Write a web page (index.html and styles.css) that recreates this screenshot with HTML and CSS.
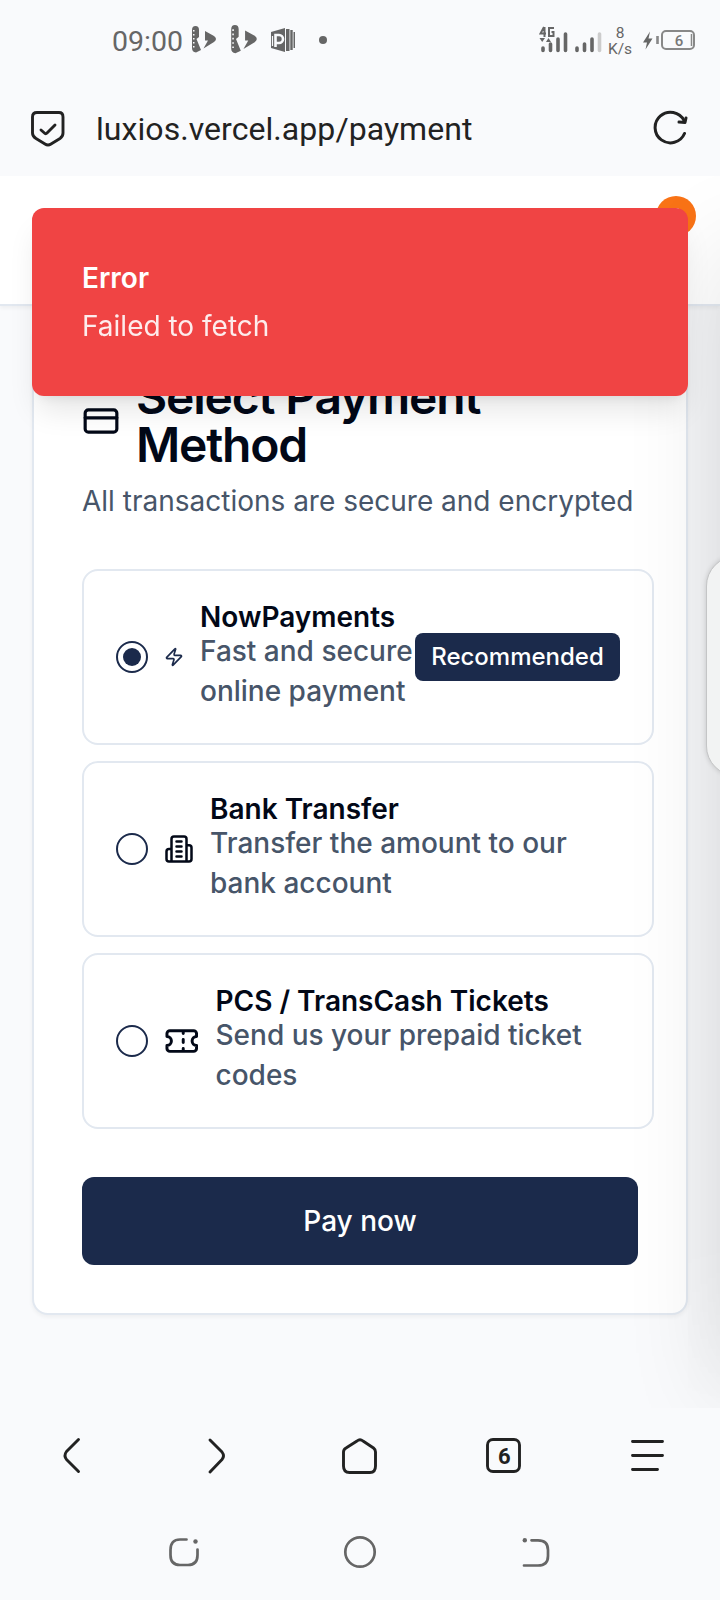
FILE: index.html
```html
<!DOCTYPE html>
<html lang="en">
<head>
<meta charset="utf-8">
<title>Payment</title>
<link rel="stylesheet" href="styles.css">
</head>
<body>
<div class="status">
  <span class="clock">09:00</span>
  <svg class="st-app" width="26" height="30" viewBox="0 0 26 30"><path fill="#666" fill-rule="evenodd" d="M1 5Q1 1 4.500 1T8 5V12L5.500 14L10 25L5 27.500Q1 27 1 23ZM2 5h1.500v1.500H2zM2 9h1.500v1.500H2zM2 13h1.500v1.500H2zM2 17h1.500v1.500H2zM2 21h1.500v1.500H2z"/><path fill="#666" d="M14 6L23 11Q27 14 23 17L12.500 23.500L17 15.500H14Z"/></svg>
  <svg class="st-app2" width="28" height="32" viewBox="0 0 26 30"><path fill="#666" fill-rule="evenodd" d="M1 5Q1 1 4.500 1T8 5V12L5.500 14L10 25L5 27.500Q1 27 1 23ZM2 5h1.500v1.500H2zM2 9h1.500v1.500H2zM2 13h1.500v1.500H2zM2 17h1.500v1.500H2zM2 21h1.500v1.500H2z"/><path fill="#666" d="M14 6L23 11Q27 14 23 17L12.500 23.500L17 15.500H14Z"/></svg>
  <svg class="st-doc" width="26" height="26" viewBox="0 0 26 26"><path fill="#666" d="M1 5L15 1V25L1 21ZM16 2H19.500V24H16ZM20.300 3H22.700V23H20.300ZM23.500 5H25V21H23.500Z"/><path d="M5.500 20V8H9a3.500 3.500 0 0 1 0 8H5" fill="none" stroke="#f9fafc" stroke-width="2.600"/><path d="M2.500 9V19" stroke="#f9fafc" stroke-width="1.200"/></svg>
  <span class="dot"></span>
  <svg class="signal" width="64" height="32" viewBox="0 0 64 32"><g fill="none" stroke="#666" stroke-width="2"><path d="M5 2L1.500 8.500H7M5.500 2V12M15 3H10V11H14.500V7H12.500"/></g><path fill="#666" d="M.5 13H6L3.200 17zM7 17H12L9.500 13z"/><g stroke="#666" stroke-width="3.600" stroke-linecap="round"><path d="M4 23V25.500M11.500 19V25.500M19 14V25.500M26.500 9V25.500M38 23V25.500M45.500 19V25.500M53 14V25.500"/><path stroke="#ccc" d="M60.500 9V25.500"/></g></svg>
  <span class="speed"><span>8</span><span>K/s</span></span>
  <svg class="battery" width="54" height="24" viewBox="0 0 54 24"><path fill="#666" d="M8 3.500L1 14.500H5L3.500 21.500L10.500 10.500H6.500Z"/><path d="M15.500 8V16" stroke="#888" stroke-width="2.600"/><rect x="20" y="3" width="32" height="18" rx="4" fill="none" stroke="#888" stroke-width="2"/><path d="M49.500 6V18" stroke="#888" stroke-width="1.500"/><text x="37" y="17.500" text-anchor="middle" class="batt-num">6</text></svg>
</div>
<div class="urlbar">
  <svg class="shield" width="34" height="36" viewBox="0 0 34 36"><g fill="none" stroke="#222" stroke-width="2.900" stroke-linecap="round" stroke-linejoin="round"><path d="M6 1.500H28Q32 1.500 32 6V22Q32 25.500 29 27.500L20 33Q17 35 14 33L5 27.500Q1.500 25.500 1.500 22V6Q1.500 1.500 6 1.500Z"/><path d="M10 19L14 22.500Q15 23 16 22L24 14"/></g></svg>
  <span class="url">luxios.vercel.app/payment</span>
  <svg class="reload" width="36" height="36" viewBox="0 0 36 36"><g fill="none" stroke="#222" stroke-width="3" stroke-linecap="round" stroke-linejoin="round"><path d="M31.500 23.500A15.300 15.300 0 1 1 31 10.500"/><path d="M33 8L32 12.500L26 12"/></g></svg>
</div>
<div class="page">
  <header class="head"><span class="count">1</span></header>
  <main class="main">
    <section class="card">
      <div class="card-title">
        <svg width="38" height="48" viewBox="0 0 24 24" class="ico"><rect width="20" height="14" x="2" y="5" rx="2"/><path d="M2 10H22"/></svg>
        <h1>Select Payment Method</h1>
      </div>
      <p class="sub">All transactions are secure and encrypted</p>
      <div class="options">
        <div class="option">
          <span class="radio on"></span>
          <svg width="20" height="40" viewBox="0 0 24 24" class="ico navy"><path d="M4 14a1 1 0 0 1-.78-1.630l9.900-10.200a.5.5 0 0 1 .86.460l-1.920 6.020A1 1 0 0 0 13 10h7a1 1 0 0 1 .78 1.630l-9.900 10.200a.5.5 0 0 1-.86-.460l1.920-6.020A1 1 0 0 0 11 14z"/></svg>
          <div class="txt first"><b>NowPayments</b><span>Fast and secure online payment</span></div>
          <span class="badge">Recommended</span>
        </div>
        <div class="option">
          <span class="radio"></span>
          <svg width="30" height="40" viewBox="0 0 24 24" class="ico"><path d="M6 22V4a2 2 0 0 1 2-2h8a2 2 0 0 1 2 2v18ZM6 12H4a2 2 0 0 0-2 2v6a2 2 0 0 0 2 2h2M18 9h2a2 2 0 0 1 2 2v9a2 2 0 0 1-2 2h-2M10 6h4M10 10h4M10 14h4M10 18h4"/></svg>
          <div class="txt"><b>Bank Transfer</b><span>Transfer the amount to our bank account</span></div>
        </div>
        <div class="option">
          <span class="radio"></span>
          <svg width="35.500" height="40" viewBox="0 0 24 24" class="ico"><path d="M2 9a3 3 0 0 1 0 6v2a2 2 0 0 0 2 2h16a2 2 0 0 0 2-2v-2a3 3 0 0 1 0-6V7a2 2 0 0 0-2-2H4a2 2 0 0 0-2 2ZM13 5v2M13 17v2M13 11v2"/></svg>
          <div class="txt"><b>PCS / TransCash Tickets</b><span>Send us your prepaid ticket codes</span></div>
        </div>
      </div>
      <button class="pay">Pay now</button>
    </section>
  </main>
  <div class="edge-shade"></div>
  <div class="edge-strip"></div>
  <div class="handle"></div>
  <div class="toast"><strong>Error</strong><span>Failed to fetch</span></div>
</div>
<nav class="toolbar">
  <svg width="40" height="40" viewBox="0 0 40 40"><path d="M26.500 3.500L14.500 15.500Q11.500 19.500 14.500 23.500L26.500 35.500"/></svg>
  <svg width="40" height="40" viewBox="0 0 40 40"><path d="M14 4L26 16Q29 20 26 23.500L14 36"/></svg>
  <svg width="40" height="40" viewBox="0 0 40 40"><path d="M17 5Q20 2.500 23 5L33.500 12Q35.500 13.500 35.500 16V30Q35.500 36.500 30 36.500H9.500Q3.500 36.500 3.500 30V16Q3.500 13.500 6 12Z"/></svg>
  <svg width="40" height="40" viewBox="0 0 40 40"><rect x="3.500" y="3.500" width="32" height="32" rx="5.500"/><text x="20.300" y="27.500" text-anchor="middle" class="tabs">6</text></svg>
  <svg width="40" height="40" viewBox="0 0 40 40"><path d="M4.500 5.500H34.500M4.500 19.500H34.500M4.500 33.500H29.500"/></svg>
</nav>
<nav class="sysnav">
  <svg width="40" height="40" viewBox="0 0 40 40"><path d="M22.500 7.500H16Q6.500 7.500 6.500 18V23Q6.500 33 16 33H24Q33.500 33 33.500 23V17.500"/><circle class="pt" cx="31.500" cy="9.500" r="2.200"/></svg>
  <svg width="40" height="40" viewBox="0 0 40 40"><circle cx="20" cy="20" r="14.700"/></svg>
  <svg width="40" height="40" viewBox="0 0 40 40"><path d="M15.500 8.300H22Q32 8.300 32 18V24Q32 33.500 22 33.500H8"/><circle class="pt" cx="8.800" cy="8.300" r="2.200"/></svg>
</nav>
</body>
</html>
```
FILE: styles.css
```css
* { box-sizing: border-box; }
body {
  margin: 0;
  width: 720px;
  height: 1600px;
  overflow: hidden;
  display: flex;
  flex-direction: column;
  background: #f9fafc;
  font-family: Inter, "Liberation Sans", sans-serif;
  color: #020817;
}
svg { flex: none; display: block; }

/* Phone status bar */
.status {
  height: 80px;
  padding-left: 112px;
  display: flex;
  align-items: center;
  color: #666;
  font-family: Roboto, sans-serif;
}
.clock { width: 79px; font-size: 28.500px; line-height: 32px; margin-top: 4px; }
.st-app { margin-right: 13px; }
.st-app2 { margin-right: 12px; }
.st-doc { margin-right: 23px; }
.dot { width: 8px; height: 8px; border-radius: 50%; background: #666; }
.signal { margin-left: 212px; margin-top: 2px; }
.speed {
  width: 28px;
  margin-left: 3px;
  margin-top: 2px;
  display: flex;
  flex-direction: column;
  align-items: center;
  font-size: 15.500px;
  line-height: 16px;
}
.battery { margin-left: 8px; }
.batt-num { font: 500 15px Roboto, sans-serif; fill: #777; }

/* Address bar */
.urlbar { height: 96px; padding: 0 32px 0 31px; display: flex; align-items: center; }
.shield { margin-top: 1px; }
.url {
  flex: 1;
  margin-left: 31px;
  margin-top: 2px;
  font: 400 32px/40px Roboto, sans-serif;
  letter-spacing: .06px;
  color: #222;
}
.reload { margin-right: -1px; margin-top: -1px; }

/* Web page */
.page {
  position: relative;
  height: 1232px;
  overflow: hidden;
  background: #f9fafc;
}
.head {
  height: 130px;
  padding: 20px 24px 0;
  display: flex;
  justify-content: flex-end;
  background: #fff;
  border-bottom: 2px solid #e2e8f0;
  box-shadow: 0 2px 4px rgba(0, 0, 0, .05);
}
.count {
  width: 40px;
  height: 40px;
  border-radius: 50%;
  background: #f97316;
  color: #fff;
  font-size: 24px;
  line-height: 43px;
  text-align: center;
}
.main { padding: 17px 32px 0; }
.card {
  padding: 48px;
  background: #fff;
  border: 2px solid #e2e8f0;
  border-radius: 16px;
  box-shadow: 0 2px 4px rgba(0, 0, 0, .05);
}
.card-title { display: flex; align-items: center; gap: 16px; }
.ico {
  fill: none;
  stroke: #020817;
  stroke-width: 2;
  stroke-linecap: round;
  stroke-linejoin: round;
}
.navy { stroke: #1b2a4b; }
h1 {
  margin: 0;
  font-size: 48px;
  line-height: 48px;
  font-weight: 600;
  letter-spacing: -.025em;
}
.sub { margin: 12px 0 48px; font-size: 28px; line-height: 40px; color: #475569; white-space: nowrap; }
.options { width: 572px; display: flex; flex-direction: column; gap: 16px; }
.option {
  height: 176px;
  padding: 32px;
  display: flex;
  align-items: center;
  gap: 16px;
  border: 2px solid #e2e8f0;
  border-radius: 16px;
}
.radio {
  flex: none;
  width: 32px;
  height: 32px;
  border: 2px solid #1b2a4b;
  border-radius: 50%;
  display: flex;
  align-items: center;
  justify-content: center;
}
.on::before {
  content: "";
  width: 18px;
  height: 18px;
  border-radius: 50%;
  background: #1b2a4b;
}
.txt { flex: 1; font-size: 28px; font-weight: 500; }
.txt.first { flex: none; width: 215px; margin-right: -16px; }
.txt b { display: block; font-weight: 600; line-height: 28px; white-space: nowrap; }
.txt span { display: block; line-height: 40px; color: #475569; }
.badge {
  width: 205px;
  height: 48px;
  border-radius: 8px;
  background: #1b2a4b;
  color: #fff;
  font-size: 24px;
  font-weight: 500;
  line-height: 48px;
  text-align: center;
}
.pay {
  display: block;
  width: 100%;
  height: 88px;
  margin-top: 48px;
  padding: 0;
  border: 0;
  border-radius: 12px;
  background: #1b2a4b;
  color: #fff;
  font: 500 28px/40px Inter, sans-serif;
}

/* Shade cast by the panel docked past the right edge */
.edge-shade {
  position: absolute;
  left: 725px;
  top: 70px;
  width: 60px;
  height: 1150px;
  box-shadow: 0 0 100px rgba(0, 0, 0, .14);
}
.edge-strip {
  position: absolute;
  right: 0;
  top: 130px;
  width: 32px;
  height: 1102px;
  background: linear-gradient(to right, rgba(0, 0, 0, .015), rgba(0, 0, 0, .03));
  -webkit-mask-image: linear-gradient(#000 85%, transparent);
  mask-image: linear-gradient(#000 85%, transparent);
}
.handle {
  position: absolute;
  left: 706px;
  top: 380px;
  width: 60px;
  height: 220px;
  border: 1px solid #c4c5c6;
  border-radius: 32px;
  background: #f2f3f3;
  box-shadow: 0 0 5px rgba(0, 0, 0, .16);
}
.toast {
  position: absolute;
  left: 32px;
  top: 32px;
  width: 656px;
  height: 188px;
  padding: 50px;
  display: flex;
  flex-direction: column;
  gap: 8px;
  border-radius: 12px;
  background: #f04444;
  color: #fff;
  font-size: 28px;
  line-height: 40px;
  box-shadow: 0 20px 30px -6px rgba(0, 0, 0, .1), 0 8px 12px -8px rgba(0, 0, 0, .1);
}
.toast strong { font-weight: 600; }
.toast span { opacity: .9; }

/* Browser toolbar and system navigation */
.toolbar { height: 96px; display: grid; grid-template-columns: repeat(5, 1fr); place-items: center; }
.toolbar svg { fill: none; stroke: #222; stroke-width: 2.900; stroke-linecap: round; stroke-linejoin: round; }
.toolbar .tabs { font: 700 22px Roboto, sans-serif; fill: #222; stroke: none; }
.sysnav { height: 96px; display: flex; justify-content: center; align-items: center; gap: 136px; }
.sysnav svg { fill: none; stroke: #666; stroke-width: 2.700; stroke-linecap: round; }
.sysnav .pt { fill: #666; stroke: none; }
```
